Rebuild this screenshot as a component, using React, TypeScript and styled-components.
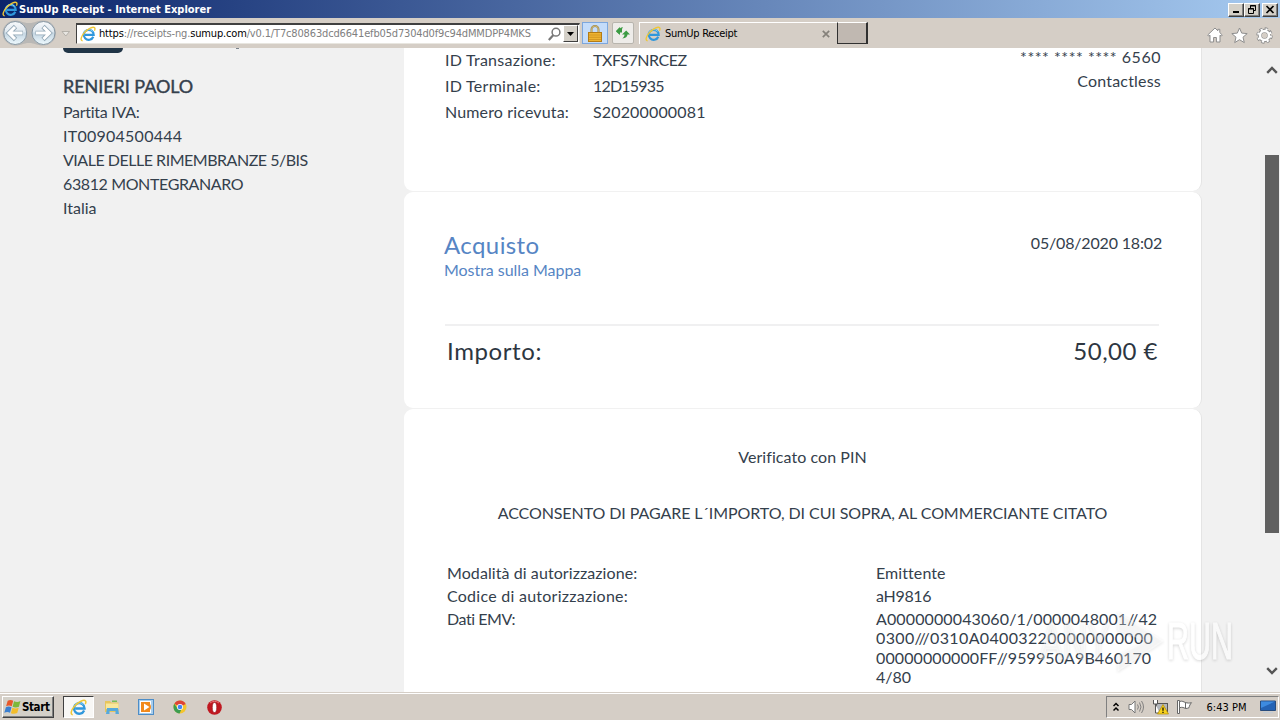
import styled, { createGlobalStyle } from 'styled-components'

const GlobalStyle = createGlobalStyle`
  * { box-sizing: border-box; }
  body { margin: 0; overflow: hidden; background: #f1f1f1; }
  svg { display: block; flex: none; }
`

const Screen = styled.div`
  width: 1280px;
  height: 720px;
  display: flex;
  flex-direction: column;
  overflow: hidden;
  font-family: 'DejaVu Sans Condensed', 'DejaVu Sans', sans-serif;
  font-size: 11px;
  color: #000;
`

const Label = styled.span<{ $ls?: number }>`
  letter-spacing: ${p => p.$ls || 0}px;
  font-variant-ligatures: none;
  white-space: nowrap;
`

/* ---------- window chrome ---------- */

const TitleBar = styled.header`
  height: 18px;
  flex: none;
  display: flex;
  align-items: center;
  padding: 0 2px;
  background: linear-gradient(90deg, #0a246a 0%, #a6caf0 100%);
`

const Title = styled.div`
  flex: 1;
  margin-left: 1px;
  color: #fff;
  font-weight: bold;
`

const WinButtons = styled.div`
  display: flex;
`

const WinButton = styled.button<{ $gap?: number }>`
  width: 16px;
  height: 14px;
  padding: 0;
  margin: 1px 0 0 ${p => p.$gap || 0}px;
  display: flex;
  align-items: center;
  justify-content: center;
  background: #d4d0c8;
  border: 1px solid;
  border-color: #fff #404040 #404040 #fff;
  box-shadow: inset -1px -1px 0 #808080;
`

const Toolbar = styled.div`
  height: 30px;
  flex: none;
  display: flex;
  align-items: center;
  background: #d5cec6;
`

const NavButtons = styled.div`
  width: 76px;
  height: 30px;
  flex: none;
`

const AddressBar = styled.div`
  width: 504px;
  height: 21px;
  display: flex;
  align-items: center;
  padding: 0 1px 0 3px;
  background: #fff;
  border: 1px solid;
  border-color: #404040 #e8e6e0 #e8e6e0 #404040;
  border-top-width: 2px;
`

const Url = styled.div`
  flex: 1;
  margin-left: 3px;
  color: #808080;
  overflow: hidden;
  b {
    font-weight: normal;
    color: #000;
  }
`

const DropButton = styled.div`
  width: 15px;
  height: 17px;
  margin-left: 2px;
  display: flex;
  align-items: center;
  justify-content: center;
  background: #d4d0c8;
  border: 1px solid;
  border-color: #fff #404040 #404040 #fff;
`

const ToolButton = styled.div<{ $active?: boolean }>`
  width: ${p => (p.$active ? 26 : 22)}px;
  height: 22px;
  margin-left: ${p => (p.$active ? 2 : 4)}px;
  display: flex;
  align-items: center;
  justify-content: center;
  background: ${p => (p.$active ? '#c4dcfa' : '#eeece9')};
  border: 1px solid ${p => (p.$active ? '#7da7dd' : '#b8b5ae')};
  border-radius: ${p => (p.$active ? 0 : 2)}px;
`

const Tab = styled.div`
  width: 198px;
  height: 22px;
  margin-left: 5px;
  display: flex;
  align-items: center;
  padding: 0 7px 0 5px;
  border-left: 1px solid #fff;
  border-top: 1px solid #fff;
`

const TabName = styled.div`
  flex: 1;
  margin-left: 4px;
`

const NewTab = styled.div`
  width: 31px;
  height: 22px;
  background: #c0b8b1;
  border: 1px solid;
  border-color: #fff #303030 #303030 #303030;
  border-right-width: 2px;
`

const Tools = styled.div`
  display: flex;
  gap: 8px;
  margin: 4px 7px 0 auto;
`

/* ---------- page ---------- */

const Page = styled.main`
  flex: 1;
  min-height: 0;
  display: flex;
  overflow: hidden;
  background: #f1f1f1;
  font-family: Lato, 'Open Sans', sans-serif;
  font-size: 16px;
  color: #34404c;
`

const Merchant = styled.aside`
  width: 404px;
  padding-left: 63px;
  line-height: 24px;
`

const LogoStrip = styled.div`
  height: 26px;
  display: flex;
  align-items: flex-start;
`

const LogoEdge = styled.div`
  width: 60px;
  height: 5px;
  background: #213547;
  border-radius: 0 0 5px 5px;
`

const Descender = styled.div`
  width: 3px;
  height: 1px;
  margin-left: 113px;
  background: #7b838b;
`

const MerchantName = styled.div`
  height: 26px;
  line-height: 25px;
  font-size: 18px;
  -webkit-text-stroke: 0.4px #34404c;
`

const Line = styled.div`
  height: 24px;
`

const Cards = styled.div`
  width: 798px;
  display: flex;
  flex-direction: column;
`

const Card = styled.section<{ $h: number; $first?: boolean }>`
  height: ${p => p.$h}px;
  flex: none;
  background: #fff;
  border-right: 1px solid #e4e4e4;
  border-radius: ${p => (p.$first ? '0 0 9px 9px' : '9px')};
  margin-bottom: 1px;
`

const Between = styled.div`
  display: flex;
  justify-content: space-between;
  padding: 0 40px 0 41px;
`

const Ids = styled.div`
  display: grid;
  grid-template-columns: 148px auto;
  grid-auto-rows: 26px;
  line-height: 26px;
  margin-top: -1px;
`

const CardInfo = styled.div`
  display: flex;
  flex-direction: column;
  align-items: flex-end;
  line-height: 24px;
  margin-top: -3px;
`

const PurchaseHead = styled(Between)`
  height: 132px;
  padding: 39px 39px 0 40px;
`

const Purchase = styled.div`
  color: #5685c4;
  line-height: 24px;
`

const PurchaseTitle = styled.div`
  height: 27px;
  line-height: 28px;
  font-size: 24px;
`

const PurchaseDate = styled.div`
  padding-top: 2px;
`

const Rule = styled.hr`
  height: 2px;
  margin: 0 42px 0 41px;
  border: 0;
  background: #f0f0f1;
`

const Amount = styled.div`
  display: flex;
  justify-content: space-between;
  padding: 8px 43px 0;
  font-size: 24px;
  line-height: 34px;
  color: #2d3641;
`

const Statement = styled.div<{ $h: number }>`
  height: ${p => p.$h}px;
  text-align: center;
  line-height: 24px;
`

const Auth = styled.div`
  display: grid;
  grid-template-columns: 429px auto;
  padding-left: 43px;
  line-height: 23px;
`

const Emv = styled.div`
  display: flex;
  flex-direction: column;
  padding-top: 2px;
  line-height: 19.4px;
`

const ScrollBar = styled.div`
  width: 16px;
  margin-left: auto;
  display: flex;
  flex-direction: column;
  align-items: center;
  padding: 17px 0 16px;
`

const Thumb = styled.div`
  width: 14px;
  height: 378px;
  margin: 80px 0 auto;
  background: #606060;
`

const Watermark = styled.div`
  position: absolute;
  left: 1036px;
  top: 606px;
  filter: drop-shadow(0 1px 1.5px rgba(0, 0, 0, 0.28));
  opacity: 0.6;
`

/* ---------- taskbar ---------- */

const TaskBar = styled.footer`
  height: 28px;
  flex: none;
  display: flex;
  align-items: center;
  padding: 2px 0 0 2px;
  background: #d5cec6;
  box-shadow: inset 0 1px 0 #d5cec6, inset 0 2px 0 #fff;
`

const Start = styled.div`
  width: 52px;
  height: 22px;
  display: flex;
  align-items: center;
  padding-left: 1px;
  background: #d4d0c8;
  border: 1px solid;
  border-color: #fff #404040 #404040 #fff;
  box-shadow: inset -1px -1px 0 #808080;
  font-weight: bold;
  font-size: 11.5px;
`

const Task = styled.div<{ $pressed?: boolean }>`
  width: ${p => (p.$pressed ? 31 : 34)}px;
  height: 22px;
  display: flex;
  align-items: center;
  justify-content: center;
  border: ${p => (p.$pressed ? '1px solid' : '0')};
  border-color: #404040 #fff #fff #404040;
  background: ${p => (p.$pressed ? '#f8f7f5' : 'none')};
  margin-left: ${p => (p.$pressed ? 9 : 0)}px;

  & + & {
    margin-left: 1px;
  }
  & + & ~ & {
    margin-left: 0;
  }
`

const Tray = styled.div`
  width: 173px;
  height: 22px;
  margin: 0 1px 0 auto;
  display: flex;
  align-items: center;
  gap: 7px;
  padding: 0 2px 0 6px;
  border: 1px solid;
  border-color: #808080 #fff #fff #808080;
`

const Clock = styled.div`
  margin: 0 auto;
`

/* ---------- icons ---------- */

const IeIcon = ({ size = 16 }: { size?: number }) => (
  <svg width={size} height={size} viewBox="0 0 16 16" fill="none">
    <path d="M13.3 10.8A5 5 0 1 1 13.7 8.900H5" stroke="#2f97dc" strokeWidth="2.2" />
    <path d="M12.600 5.400A5 5 0 0 0 3.900 7" stroke="#8fd6f7" strokeWidth="0.9" />
    <path d="M2.6 14.8C.2 14.6.8 10.8 4.2 6.9 8 2.6 13.2.2 14.6 1.8c.6.7.4 1.8-.2 3" stroke="#efc736" strokeWidth="1.4" />
  </svg>
)

const BackForward = () => (
  <svg width="76" height="30" viewBox="0 0 76 30" fill="none">
    <defs>
      <linearGradient id="ball" x1="0" y1="0" x2="0" y2="1">
        <stop offset="0" stopColor="#f7f9fb" />
        <stop offset="0.45" stopColor="#dfe8ef" />
        <stop offset="0.5" stopColor="#c4d5e1" />
        <stop offset="1" stopColor="#eefaff" />
      </linearGradient>
    </defs>
    <path d="M15 2.500C22 2.500 22 5 29 5s7-2.500 14.500-2.500a12 12 0 0 1 0 25C36 27.500 35 25 29 25s-7 2.500-14 2.500a12 12 0 0 1 0-25z" fill="#b9b8b6" />
    <circle cx="15.200" cy="15" r="11.500" fill="url(#ball)" stroke="#8797a3" />
    <circle cx="43.500" cy="15" r="11.500" fill="url(#ball)" stroke="#8797a3" />
    <path d="M23 15H9.500M15.500 8.500l-6.500 6.500 6.500 6.500" stroke="#93a8b6" strokeWidth="4.600" />
    <path d="M22.500 15H9.500M15 9l-6 6 6 6" stroke="#fff" strokeWidth="3" />
    <path d="M35.500 15H49M43 8.500l6.500 6.500-6.500 6.500" stroke="#93a8b6" strokeWidth="4.600" />
    <path d="M36 15H49M43.500 9l6 6-6 6" stroke="#fff" strokeWidth="3" />
    <path d="M62 13.500h7.500L65.800 18z" fill="#e8e6e2" stroke="#aaa69f" strokeWidth="0.800" />
  </svg>
)

const SearchIcon = () => (
  <svg width="13" height="14" viewBox="0 0 13 14" fill="none" stroke="#777">
    <circle cx="8" cy="5.200" r="3.900" strokeWidth="1.500" />
    <path d="M5.200 8.200.8 13" strokeWidth="2.200" />
  </svg>
)

const LockIcon = () => (
  <svg width="14" height="17" viewBox="0 0 14 17" fill="none">
    <path d="M3.500 8V4.500a3.500 3.500 0 0 1 7 0V8" stroke="#a48a45" strokeWidth="2" />
    <path d="M3.500 8V4.500a3.500 3.500 0 0 1 7 0V8" stroke="#d8c68b" strokeWidth="0.700" />
    <rect x="0.500" y="7.500" width="13" height="9" fill="#eeb431" stroke="#b37b16" />
    <path d="M1 10h12M1 12.300h12M1 14.500h12" stroke="#c98d1c" strokeWidth="0.700" />
  </svg>
)

const RefreshIcon = () => (
  <svg width="16" height="14" viewBox="0 0 16 14" fill="#3c9b43">
    <path d="M1 5.500 4.500 1.500V4H7c0-1.300.3-2 1-3C5.500 1.500 4.500 2.300 4.500 4v4.500z" />
    <path d="M1 5 5 1v2.500h2V6.500H5V9z" />
    <path d="m15 8.500-3.800-4-4.200 4h2.500c0 1.600-.6 2.600-2.200 4 3.500-.4 5-1.600 5.200-4z" />
  </svg>
)

const HomeIcon = () => (
  <svg width="16" height="16" viewBox="0 0 16 16" fill="#fff" stroke="#8d8d8d">
    <path d="M8 1 .7 8l1.100 1.200L3 8.200V15h3.600v-4.500h2.800V15H13V8.200l1.200 1 1.100-1.200-2.500-2.400V2.300h-2v1.500z" />
  </svg>
)

const StarIcon = () => (
  <svg width="17" height="17" viewBox="0 0 17 17" fill="#fff" stroke="#8d8d8d">
    <path d="m8.500 1 2.200 5.100 5.500.5-4.200 3.600 1.300 5.400-4.800-2.900-4.800 2.900L5 10.200.8 6.600l5.500-.5z" />
  </svg>
)

const GearIcon = () => (
  <svg width="17" height="17" viewBox="0 0 17 17" fill="none">
    <circle cx="8.500" cy="8.500" r="6.700" stroke="#8d8d8d" strokeWidth="3" strokeDasharray="3.100 2.162" />
    <circle cx="8.500" cy="8.500" r="4.700" stroke="#8d8d8d" strokeWidth="4" />
    <circle cx="8.500" cy="8.500" r="6.300" stroke="#fff" strokeWidth="2.200" strokeDasharray="2 2.948" strokeDashoffset="-0.300" />
    <circle cx="8.500" cy="8.500" r="4.500" stroke="#fff" strokeWidth="2.600" />
  </svg>
)

const Arrow = ({ down }: { down?: boolean }) => (
  <svg width="12" height="10" viewBox="0 0 12 10" fill="none">
    <path d={down ? 'M1.200 2.200 6 7l4.800-4.800' : 'M1.200 7.800 6 3l4.800 4.800'} stroke="#555" strokeWidth="2.400" />
  </svg>
)

const WindowsFlag = () => (
  <svg width="18" height="18" viewBox="0 0 17 16">
    <path d="M3.500 2.200C5.500 1 7 1.200 8.700 2.200L7.300 7.400C5.500 6.400 4 6.300 2 7.400z" fill="#e8582a" />
    <path d="M9.500 2.600c2 .9 4 .9 6-.2l-1.400 5.300c-2 1-4 1-6 .1z" fill="#7db83a" />
    <path d="M1.800 8.200c2-1 3.600-.8 5.300.1L5.700 13.400c-1.700-1-3.400-1.100-5.400 0z" fill="#3b7fd0" />
    <path d="M7.900 8.700c2 .9 4 .9 6-.1l-1.400 5.100c-2 1-4 1-6 .1z" fill="#f3bd2b" />
  </svg>
)

const FolderIcon = () => (
  <svg width="16" height="16" viewBox="0 0 16 16">
    <path d="M1 2h5l1 1.500h7.500V13H1z" fill="#e7c55c" />
    <path d="M2 4.500h12.500V10H2z" fill="#f8e79c" />
    <path d="M2 15 3 9h11l1 6h-3.500v-3h-6v3z" fill="#56a9dc" />
    <path d="M8 1.500h5V3H8z" fill="#79bd58" />
  </svg>
)

const MediaIcon = () => (
  <svg width="16" height="16" viewBox="0 0 16 16">
    <rect x="0.500" y="0.500" width="15" height="15" fill="#a8cdec" stroke="#4d8dc7" />
    <rect x="2.500" y="2.500" width="10" height="11" fill="#f08a20" stroke="#fff" />
    <circle cx="8" cy="8" r="5" fill="#f28a1c" />
    <path d="M6 4.500 11.500 8 6 11.500z" fill="#fff" />
  </svg>
)

const ChromeIcon = () => (
  <svg width="14" height="14" viewBox="0 0 14 14">
    <circle cx="7" cy="7" r="6.500" fill="#f4c52c" />
    <path d="M7 7 1.400 3.700A6.500 6.500 0 0 1 12.700 4z" fill="#dd4437" />
    <path d="M1.300 3.800A6.500 6.500 0 0 0 6.600 13.500L8.500 9 4.500 8.500z" fill="#3c9d50" />
    <circle cx="7" cy="7" r="3" fill="#fff" />
    <circle cx="7" cy="7" r="2.300" fill="#4285f4" />
  </svg>
)

const OperaIcon = () => (
  <svg width="15" height="15" viewBox="0 0 15 15">
    <circle cx="7.500" cy="7.500" r="7.300" fill="#c01820" />
    <path d="M3 3A7 7 0 0 1 12 3" stroke="#e8767a" fill="none" />
    <ellipse cx="7.500" cy="7.500" rx="2.200" ry="5" fill="#fff" stroke="#8c0f15" strokeWidth="0.600" />
  </svg>
)

const ChevronsIcon = () => (
  <svg width="8" height="10" viewBox="0 0 8 10" fill="none" stroke="#000" strokeWidth="1.500">
    <path d="m.5 4 2.500-2.500L5.500 4M.5 8.500 3 6l2.500 2.500" />
  </svg>
)

const SpeakerIcon = () => (
  <svg width="17" height="16" viewBox="0 0 17 16" fill="none" stroke="#777">
    <path d="M1 5.500h2.500L7 2v12L3.500 10.500H1z" fill="#fff" />
    <path d="M9.500 5.500q1.800 2.500 0 5M11.500 3.500q3 4.500 0 9M13.500 2q4 6 0 12" strokeWidth="0.900" />
  </svg>
)

const NetworkIcon = () => (
  <svg width="17" height="16" viewBox="0 0 17 16">
    <rect x="4.500" y="4.500" width="11" height="8" fill="#b3b7bc" stroke="#555" />
    <path d="M1.500 1v4h4V1M3.500 5v9h4" fill="#fff" stroke="#555" />
    <path d="M11 5.500 16.500 15h-11z" fill="#f7d21c" stroke="#b38a00" strokeWidth="0.700" />
    <path d="M11 8.500v3.300M11 12.800v1.200" stroke="#000" strokeWidth="1.200" />
  </svg>
)

const FlagIcon = () => (
  <svg width="17" height="16" viewBox="0 0 17 16" fill="#fff" stroke="#666">
    <path d="M1.500 1.500h2v13h-2z" />
    <path d="M3.500 2.500c3-1 4 .5 6 1v6c-2-.8-3-1.700-6-.8zM9.500 3.500c2 .6 3.500.8 6 .2-1.500 1.500-2 3-2.500 5-1.500.6-2 .8-3.500.8" />
  </svg>
)

const DesktopIcon = () => (
  <svg width="16" height="14" viewBox="0 0 16 14">
    <path d="M.5 1h15v9.500H.5z" fill="#2463b5" stroke="#284c7d" />
    <path d="M1 1.500h14L1 8z" fill="#3d8be0" />
    <path d="M3 12.500h10" stroke="#c5ccd4" strokeWidth="1.500" />
  </svg>
)

function Chrome() {
  return (
    <>
      <TitleBar>
        <IeIcon />
        <Title><Label>SumUp Receipt - Internet Explorer</Label></Title>
        <WinButtons>
          <WinButton>
            <svg width="10" height="9"><path d="M2 7h6" stroke="#000" strokeWidth="2" /></svg>
          </WinButton>
          <WinButton>
            <svg width="10" height="9" fill="none" stroke="#000">
              <path d="M3.500 3V.5h5v5H7M3 1h6" />
              <path d="M1.500 3.500h5v5h-5zM1 4h6" />
            </svg>
          </WinButton>
          <WinButton $gap={2}>
            <svg width="10" height="9"><path d="m1.500 1 7 7m0-7-7 7" stroke="#000" strokeWidth="1.700" /></svg>
          </WinButton>
        </WinButtons>
      </TitleBar>
      <Toolbar>
        <NavButtons><BackForward /></NavButtons>
        <AddressBar>
          <IeIcon />
          <Url>
            <Label $ls={-0.155}>
              <b>https</b>://receipts-ng.<b>sumup.com</b>/v0.1/T7c80863dcd6641efb05d7304d0f9c94dMMDPP4MKS
            </Label>
          </Url>
          <SearchIcon />
          <DropButton>
            <svg width="7" height="4"><path d="M0 0h7L3.500 4z" /></svg>
          </DropButton>
        </AddressBar>
        <ToolButton $active><LockIcon /></ToolButton>
        <ToolButton><RefreshIcon /></ToolButton>
        <Tab>
          <IeIcon />
          <TabName><Label $ls={-0.28}>SumUp Receipt</Label></TabName>
          <svg width="8" height="8"><path d="m.8.8 6.400 6.400m0-6.400L.8 7.200" stroke="#85817a" strokeWidth="1.700" /></svg>
        </Tab>
        <NewTab />
        <Tools>
          <HomeIcon />
          <StarIcon />
          <GearIcon />
        </Tools>
      </Toolbar>
    </>
  )
}

function Receipt() {
  return (
    <Cards>
      <Card $h={143} $first>
        <Between>
          <Ids>
            <Label $ls={0.25}>ID Transazione:</Label><Label $ls={-0.45}>TXFS7NRCEZ</Label>
            <Label $ls={0.27}>ID Terminale:</Label><Label $ls={-0.8}>12D15935</Label>
            <Label $ls={0.15}>Numero ricevuta:</Label><Label $ls={0.15}>S20200000081</Label>
          </Ids>
          <CardInfo>
            <Label $ls={0.52}>**** **** **** 6560</Label>
            <Label $ls={0.2}>Contactless</Label>
          </CardInfo>
        </Between>
      </Card>
      <Card $h={216}>
        <PurchaseHead>
          <Purchase>
            <PurchaseTitle><Label $ls={0.4}>Acquisto</Label></PurchaseTitle>
            <Label $ls={-0.04}>Mostra sulla Mappa</Label>
          </Purchase>
          <PurchaseDate><Label $ls={-0.17}>05/08/2020 18:02</Label></PurchaseDate>
        </PurchaseHead>
        <Rule />
        <Amount>
          <Label $ls={0.6}>Importo:</Label>
          <Label $ls={0.5}>50,00 €</Label>
        </Amount>
      </Card>
      <Card $h={320}>
        <Statement $h={36} />
        <Statement $h={56}><Label $ls={0.06}>Verificato con PIN</Label></Statement>
        <Statement $h={60}>
          <Label $ls={-0.08}>ACCONSENTO DI PAGARE L´IMPORTO, DI CUI SOPRA, AL COMMERCIANTE CITATO</Label>
        </Statement>
        <Auth>
          <Label $ls={0.08}>Modalità di autorizzazione:</Label><Label $ls={0.08}>Emittente</Label>
          <Label $ls={0.26}>Codice di autorizzazione:</Label><Label $ls={-0.3}>aH9816</Label>
          <Label $ls={-0.45}>Dati EMV:</Label>
          <Emv>
            <Label $ls={0.12}>A0000000043060/1/0000048001//42</Label>
            <Label $ls={0.35}>0300///0310A040032200000000000</Label>
            <Label $ls={0.1}>00000000000FF//959950A9B460170</Label>
            <Label>4/80</Label>
          </Emv>
        </Auth>
      </Card>
    </Cards>
  )
}

function App() {
  return (
    <Screen>
      <GlobalStyle />
      <Chrome />
      <Page>
        <Merchant>
          <LogoStrip><LogoEdge /><Descender /></LogoStrip>
          <MerchantName><Label $ls={-0.06}>RENIERI PAOLO</Label></MerchantName>
          <Line><Label $ls={-0.28}>Partita IVA:</Label></Line>
          <Line><Label $ls={0.25}>IT00904500444</Label></Line>
          <Line><Label $ls={-0.48}>VIALE DELLE RIMEMBRANZE 5/BIS</Label></Line>
          <Line><Label $ls={-0.38}>63812 MONTEGRANARO</Label></Line>
          <Line><Label>Italia</Label></Line>
        </Merchant>
        <Receipt />
        <ScrollBar>
          <Arrow />
          <Thumb />
          <Arrow down />
        </ScrollBar>
      </Page>
      <TaskBar>
        <Start><WindowsFlag /><Label $ls={-0.4}>Start</Label></Start>
        <Task $pressed><IeIcon size={17} /></Task>
        <Task><FolderIcon /></Task>
        <Task><MediaIcon /></Task>
        <Task><ChromeIcon /></Task>
        <Task><OperaIcon /></Task>
        <Tray>
          <ChevronsIcon />
          <SpeakerIcon />
          <NetworkIcon />
          <FlagIcon />
          <Clock><Label>6:43 PM</Label></Clock>
          <DesktopIcon />
        </Tray>
      </TaskBar>
      <Watermark>
        <svg width="216" height="72" viewBox="0 0 216 72" fontFamily="'Liberation Sans', sans-serif" fontSize="51" fill="#fff">
          <g stroke="#fff" strokeWidth="1.200">
            <text x="4" y="53" textLength="70" lengthAdjust="spacingAndGlyphs" fillOpacity="0.500" strokeOpacity="0.500">ANY</text>
            <path d="M82 6v18l28 11-28 14v16l45-30z" fillOpacity="0.450" strokeOpacity="0.450" />
            <text x="131" y="53" textLength="66" lengthAdjust="spacingAndGlyphs">RUN</text>
          </g>
        </svg>
      </Watermark>
    </Screen>
  )
}

export default App
